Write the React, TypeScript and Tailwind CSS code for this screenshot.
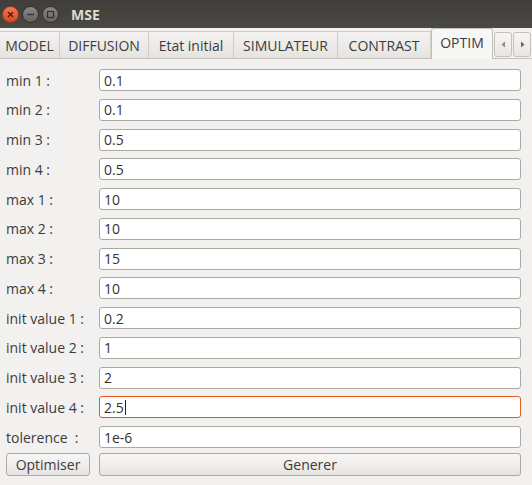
import React from 'react';

const fields: { label: string; value: string; focused?: boolean }[] = [
  { label: 'min 1 :', value: '0.1' },
  { label: 'min 2 :', value: '0.1' },
  { label: 'min 3 :', value: '0.5' },
  { label: 'min 4 :', value: '0.5' },
  { label: 'max 1 :', value: '10' },
  { label: 'max 2 :', value: '10' },
  { label: 'max 3 :', value: '15' },
  { label: 'max 4 :', value: '10' },
  { label: 'init value 1 :', value: '0.2' },
  { label: 'init value 2 :', value: '1' },
  { label: 'init value 3 :', value: '2' },
  { label: 'init value 4 :', value: '2.5', focused: true },
  { label: 'tolerence  :', value: '1e-6' },
];

const tabs = [
  { name: 'MODEL', w: 60 },
  { name: 'DIFFUSION', w: 89 },
  { name: 'Etat initial', w: 85 },
  { name: 'SIMULATEUR', w: 104 },
  { name: 'CONTRAST', w: 93 },
];

// ─── Title bar ────────────────────────────────────────────────────────────────

function TitleBar() {
  return (
    <div className="flex h-[28px] items-center bg-gradient-to-b from-[#3f3e3a] to-[#494843] pl-[2px]">
      <div className="flex items-center gap-[3px]">
        <div className="flex h-[17px] w-[17px] items-center justify-center rounded-full border border-[#9b3a1a] bg-gradient-to-b from-[#f47a52] to-[#d9461b] text-[#4a1a0a]">
          <svg width="7" height="7" viewBox="0 0 7 7">
            <path d="M1 1L6 6M6 1L1 6" stroke="currentColor" strokeWidth="1.4" />
          </svg>
        </div>
        <div className="flex h-[17px] w-[17px] items-center justify-center rounded-full border border-[#2f2e2b] bg-gradient-to-b from-[#8a8883] to-[#65635f] text-[#34332f]">
          <svg width="9" height="9" viewBox="0 0 9 9">
            <path d="M1 4.5H8" stroke="currentColor" strokeWidth="1.4" />
          </svg>
        </div>
        <div className="flex h-[17px] w-[17px] items-center justify-center rounded-full border border-[#2f2e2b] bg-gradient-to-b from-[#8a8883] to-[#65635f] text-[#34332f]">
          <svg width="9" height="9" viewBox="0 0 9 9">
            <rect x="1.5" y="1.5" width="6" height="6" fill="none" stroke="currentColor" strokeWidth="1.2" />
          </svg>
        </div>
      </div>
      <span className="ml-[12px] text-[14px] font-bold text-[#dfdbd2]">MSE</span>
    </div>
  );
}

// ─── Tab bar ──────────────────────────────────────────────────────────────────

function TabBar() {
  return (
    <div className="flex h-[31px] items-end border-b border-[#c4c1bb] bg-[#f2f1f0]">
      {tabs.map((t) => (
        <div
          key={t.name}
          style={{ width: t.w }}
          className="flex h-[27px] shrink-0 items-center justify-center border-r border-t border-[#d0cdc8] bg-gradient-to-b from-[#f3f2f1] to-[#e6e4e1] text-[14px] text-[#3c3c3c]"
        >
          {t.name}
        </div>
      ))}
      <div className="relative -mb-px flex h-[31px] w-[62px] shrink-0 items-center justify-center rounded-t-[3px] border-x border-t border-[#c4c1bb] bg-[#f7f7f6] pb-[3px] text-[14px] text-[#3c3c3c]">
        OPTIM
      </div>
      <div className="mb-[1px] ml-[1px] flex h-[25px] gap-[1px]">
        <div className="flex w-[18px] items-center justify-center rounded-[3px] border border-[#c4c1bb] bg-gradient-to-b from-[#f7f6f5] to-[#e8e6e3]">
          <svg width="5" height="7" viewBox="0 0 5 7">
            <path d="M4 0.5L0.5 3.5L4 6.5Z" fill="#8d8a85" />
          </svg>
        </div>
        <div className="flex w-[18px] items-center justify-center rounded-[3px] border border-[#c4c1bb] bg-gradient-to-b from-[#f7f6f5] to-[#e8e6e3]">
          <svg width="5" height="7" viewBox="0 0 5 7">
            <path d="M1 0.5L4.5 3.5L1 6.5Z" fill="#6a6762" />
          </svg>
        </div>
      </div>
    </div>
  );
}

// ─── Form ─────────────────────────────────────────────────────────────────────

function Field({ value, focused }: { value: string; focused?: boolean }) {
  return (
    <div
      className={`flex h-[22px] items-center rounded-[3px] bg-white pl-[4px] text-[14px] text-[#333333] ${
        focused ? 'border border-[#e8591f]' : 'border border-[#aca8a2]'
      }`}
    >
      {value}
      {focused && <span className="ml-[1px] h-[15px] w-px bg-[#222]" />}
    </div>
  );
}

export default function App() {
  return (
    <div
      className="h-[485px] w-[532px] overflow-hidden bg-[#f2f1f0]"
      style={{ fontFamily: '"Open Sans", "Noto Sans", sans-serif' }}
    >
      <TitleBar />
      <TabBar />
      <div className="grid grid-cols-[93px_1fr] gap-y-[7.75px] pl-[6px] pr-[11px] pt-[10px] text-[14px] text-[#3c3c3c]">
        {fields.map((f) => (
          <React.Fragment key={f.label}>
            <div className="flex h-[22px] items-center whitespace-pre">{f.label}</div>
            <Field value={f.value} focused={f.focused} />
          </React.Fragment>
        ))}
      </div>
      <div className="mt-[5px] grid grid-cols-[93px_1fr] pl-[6px] pr-[11px] text-[14px] text-[#3c3c3c]">
        <div className="flex h-[23px] w-[84px] items-center justify-center rounded-[3px] border border-[#aca8a2] bg-gradient-to-b from-[#f8f7f6] to-[#e6e4e1]">
          Optimiser
        </div>
        <div className="flex h-[23px] items-center justify-center rounded-[3px] border border-[#aca8a2] bg-gradient-to-b from-[#f8f7f6] to-[#e6e4e1]">
          Generer
        </div>
      </div>
    </div>
  );
}
